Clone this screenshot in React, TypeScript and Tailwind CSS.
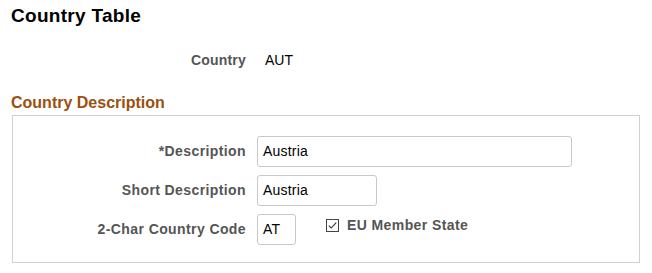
import React from "react";

const font = "font-['Arial','Liberation_Sans',sans-serif]";

function Row({ label, children }: { label: string; children: React.ReactNode }) {
  return (
    <div className="flex items-start">
      <div className="w-[233px] h-[31px] flex items-center justify-end text-[14px] tracking-[0.4px] font-bold text-[#555]">
        {label}
      </div>
      <div className="ml-[11px] flex items-start">{children}</div>
    </div>
  );
}

function Field({ value, width }: { value: string; width: string }) {
  return (
    <div
      className={`${width} h-[31px] flex items-center pl-[5px] border border-[#c8c8c8] rounded-[3px] bg-white text-[14px] tracking-[0.2px] text-black`}
    >
      {value}
    </div>
  );
}

export default function App() {
  return (
    <div className={`${font} w-[652px] h-[273px] bg-white relative overflow-hidden`}>
      <h1 className="pl-[11px] pt-[5px] text-[19px] leading-[22px] tracking-[0.3px] font-bold text-black">
        Country Table
      </h1>

      <div className="mt-[22px] flex items-center h-[22px]">
        <div className="w-[246px] text-right text-[14px] tracking-[0.2px] font-bold text-[#555]">Country</div>
        <div className="ml-[19px] text-[14px] text-black">AUT</div>
      </div>

      <h2 className="mt-[23px] pl-[11px] text-[16px] leading-[18px] font-bold text-[#9c4f0e]">
        Country Description
      </h2>

      <div className="ml-[12px] mt-[3px] w-[628px] h-[148px] border border-[#d0d0d0] pt-[20px] flex flex-col gap-[8px]">
        <Row label="*Description">
          <Field value="Austria" width="w-[315px]" />
        </Row>
        <Row label="Short Description">
          <Field value="Austria" width="w-[120px]" />
        </Row>
        <Row label="2-Char Country Code">
          <Field value="AT" width="w-[39px]" />
          <div className="ml-[30px] mt-[1px] flex items-center gap-[8px]">
            <svg width="13" height="13" viewBox="0 0 13 13">
              <rect x="0.5" y="0.5" width="12" height="12" fill="white" stroke="#444" />
              <path d="M2.8 6.6 L5.2 9 L10.2 3.6" fill="none" stroke="#333" strokeWidth="1.1" />
            </svg>
            <span className="text-[14px] tracking-[0.4px] font-bold text-[#555]">EU Member State</span>
          </div>
        </Row>
      </div>
    </div>
  );
}
